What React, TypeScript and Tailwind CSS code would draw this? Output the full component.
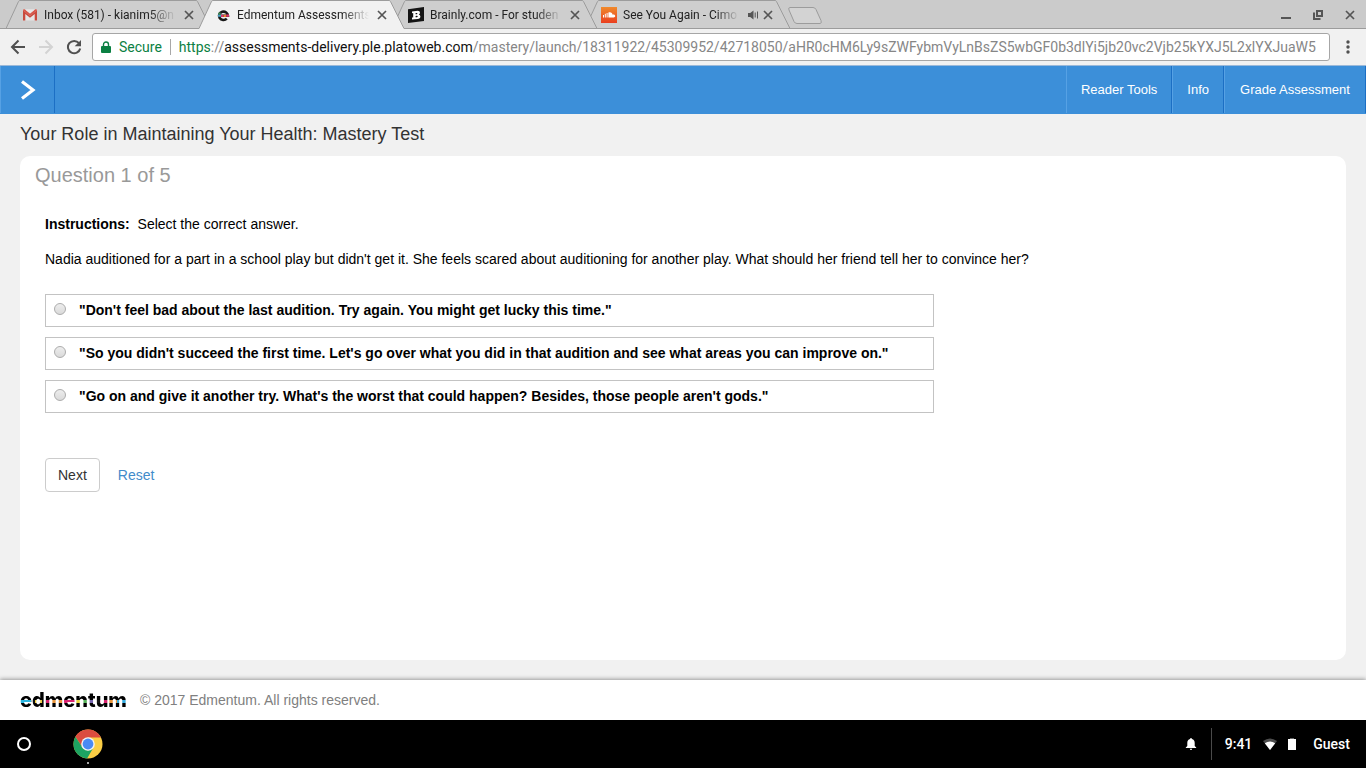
import { useState } from 'react';
import type { ReactNode } from 'react';
import clsx from 'clsx';

type TabProps = {
  title: string;
  icon: ReactNode;
  active?: boolean;
  audio?: boolean;
  className?: string;
};

const GmailIcon = () => (
  <svg viewBox="0 0 16 16" className="size-4">
    <path d="M1.5 2.5h13v11h-13z" fill="#e4e4e4" />
    <path d="M1 13.5V3.2l7 5.6 7-5.6v10.3h-2.3V7L8 10.8 3.3 7v6.5z" fill="#c9493c" />
    <path d="M1 3.4c0-1.1 1.2-1.4 2-.8l5 4 5-4c.8-.6 2-.3 2 .8L8 9z" fill="#d8574a" />
    <path d="M3.3 2.6h9.4L8 6.5z" fill="#e8e6e6" />
  </svg>
);

const EdmentumIcon = () => (
  <svg viewBox="0 0 16 16" className="size-4">
    <path
      d="M5 8.8h8A4.5 4.2 0 1 0 11.8 11.700"
      fill="none"
      stroke="#171717"
      strokeWidth="2.600"
    />
    <path d="M3 7.400h3v2.400H3z" fill="#4b9fc4" />
    <path d="M6 7.800h2.600v2.200H6z" fill="#d9336c" />
    <path d="M8.600 7.800h2.600v2.200H8.600z" fill="#e8842d" />
    <path d="M11.200 7.400H14v2.400h-2.800z" fill="#d9336c" />
    <path d="M3.500 5.500h2.200v1.900H3.300z" fill="#3f8f52" />
  </svg>
);

const BrainlyIcon = () => (
  <svg viewBox="0 0 16 16" className="size-4">
    <path d="M0 2.2 16 0v14L0 16z" fill="#141414" />
    <path
      fillRule="evenodd"
      d="M4 4.4 9.8 3.8q2.2 0 2.2 1.9 0 1.3-1.2 1.8 1.6.3 1.6 2 0 2.3-2.8 2.5L4 12.4v-1.8l1.2-.1V6.1L4 6.2zM7.6 6v1.2h1q.8-.1.8-.7T8.7 6zm0 2.9v1.4l1.2-.1q.9-.1.9-.8t-.9-.6z"
      fill="#fff"
    />
  </svg>
);

const SoundcloudIcon = () => (
  <svg viewBox="0 0 16 16" className="size-4">
    <defs>
      <linearGradient id="sc" x1="0" y1="0" x2="0" y2="1">
        <stop offset="0" stopColor="#f08a2c" />
        <stop offset="1" stopColor="#ea3f1f" />
      </linearGradient>
    </defs>
    <path d="M0 0h16v16H0z" fill="url(#sc)" />
    <path d="M2.5 8v2.5M4.3 6.8v3.7M6.1 6v4.5" stroke="#fff" strokeWidth="1" />
    <path d="M7.4 10.5V5.6c2-1 4 0 4.2 2.1 1.4-.4 2.6.3 2.6 1.4s-.8 1.4-1.5 1.4z" fill="#fff" />
  </svg>
);

const CloseIcon = ({ className }: { className: string }) => (
  <svg viewBox="0 0 10 10" className={className}>
    <path d="m1 1 8 8M9 1 1 9" stroke="currentColor" strokeWidth="1.7" />
  </svg>
);

const Tab = ({ title, icon, active, audio, className }: TabProps) => (
  <div className={clsx('relative h-[29px] w-[205px]', className)}>
    <svg viewBox="0 0 205 29" className="absolute inset-0 h-full w-full">
      <path
        d="M0 29V28.5L12.5 1.5Q13 .5 14 .5H190Q191 .5 191.5 1.5L205 28.5V29Z"
        fill={active ? '#f1f1f1' : '#cecece'}
      />
      <path
        d={
          active
            ? 'M0 28.5L12.5 1.5Q13 .5 14 .5H190Q191 .5 191.5 1.5L205 28.5'
            : 'M0 28.5L12.5 1.5Q13 .5 14 .5H190Q191 .5 191.5 1.5L205 28.5H0'
        }
        fill="none"
        stroke="#9c9c9c"
      />
    </svg>
    <div className="relative flex h-full items-center pr-[17px] pl-4">
      {icon}
      <span className="ml-[6px] min-w-0 flex-1 mask-r-from-80% text-xs whitespace-nowrap text-[#222]">
        {title}
      </span>
      {audio && (
        <svg viewBox="0 0 12 12" className="ml-2 size-3 text-[#555]">
          <path d="M1 4h2.2L6.5 1.500v9L3.200 8H1z" fill="currentColor" />
          <path d="M8.200 3.500v5M10.500 2.500v7" stroke="currentColor" strokeWidth="1" />
        </svg>
      )}
      <button
        type="button"
        aria-label="Close tab"
        className={clsx('text-[#555]', audio ? 'ml-1' : 'ml-2')}
      >
        <CloseIcon className="size-[10px]" />
      </button>
    </div>
  </div>
);

const TabStrip = () => (
  <div className="flex h-[29px] justify-between bg-[#cbcbcb] shadow-[inset_0_-1px_0_#9c9c9c]">
    <div className="flex pl-[6px]">
      <Tab title="Inbox (581) - kianim5@n" icon={<GmailIcon />} className="z-10" />
      <Tab
        title="Edmentum Assessments"
        icon={<EdmentumIcon />}
        active
        className="z-20 -ml-3"
      />
      <Tab title="Brainly.com - For studen" icon={<BrainlyIcon />} className="z-10 -ml-3" />
      <Tab title="See You Again - Cimo" icon={<SoundcloudIcon />} audio className="-ml-3" />
      <button type="button" aria-label="New tab" className="-ml-1">
        <svg viewBox="0 0 38 20" className="h-5 w-[38px]">
          <path
            d="M4 2.5h23q2 0 3 2l5 11q1 3-1 3H11q-2 0-3-2L3 5q-1-2.5 1-2.5z"
            fill="#d3d3d3"
            stroke="#9c9c9c"
          />
        </svg>
      </button>
    </div>
    <div className="flex items-center gap-[22px] pr-[11px] text-[#555]">
      <button type="button" aria-label="Minimize">
        <svg viewBox="0 0 10 10" className="size-[10px]">
          <path d="M0 7h10v2H0z" fill="currentColor" />
        </svg>
      </button>
      <button type="button" aria-label="Restore">
        <svg viewBox="0 0 10 10" className="size-[10px]">
          <path d="M4 1h5v5H4zM1 2.5V9h6.5" fill="none" stroke="currentColor" strokeWidth="2" />
        </svg>
      </button>
      <button type="button" aria-label="Close">
        <CloseIcon className="size-[10px]" />
      </button>
    </div>
  </div>
);

const Toolbar = () => (
  <div className="flex h-[37px] items-center border-b border-[#9bb9d9] bg-[#f1f1f1] pl-[10px] text-[#505050]">
    <button type="button" aria-label="Back">
      <svg viewBox="0 0 16 16" className="size-4">
        <path d="M15 8H2.5M8.5 1.5 2 8l6.5 6.5" fill="none" stroke="currentColor" strokeWidth="2" />
      </svg>
    </button>
    <button type="button" aria-label="Forward" className="ml-3 text-[#d3d3d3]">
      <svg viewBox="0 0 16 16" className="size-4">
        <path d="M1 8h12.5M7.5 1.5 14 8l-6.5 6.5" fill="none" stroke="currentColor" strokeWidth="2" />
      </svg>
    </button>
    <button type="button" aria-label="Reload" className="ml-3">
      <svg viewBox="0 0 16 16" className="size-4">
        <path
          d="M13 4.2A6.2 6.2 0 1 0 14.2 9.5"
          fill="none"
          stroke="currentColor"
          strokeWidth="2"
        />
        <path d="M15 1v6.3H8.7z" fill="currentColor" />
      </svg>
    </button>
    <div className="ml-[10px] flex h-7 min-w-0 flex-1 items-center overflow-hidden rounded-[3px] border border-[#a6a6a6] bg-white pr-1 pl-2 text-sm whitespace-nowrap">
      <svg viewBox="0 0 10 12" className="h-3 w-[10px] shrink-0 text-[#0b8043]">
        <path d="M1 5h8q1 0 1 1v5q0 1-1 1H1q-1 0-1-1V6q0-1 1-1z" fill="currentColor" />
        <path d="M2.5 5.5V3.5a2.5 2.5 0 0 1 5 0v2" fill="none" stroke="currentColor" strokeWidth="1.4" />
      </svg>
      <span className="ml-2 text-[#0b8043]">Secure</span>
      <span className="mx-2 h-4 w-px shrink-0 bg-[#a8a8a8]" />
      <span className="text-[#868686]">
        <span className="text-[#0b8043]">https</span>://
        <span className="text-[#111]">assessments-delivery.ple.platoweb.com</span>
        /mastery/launch/18311922/45309952/42718050/aHR0cHM6Ly9sZWFybmVyLnBsZS5wbGF0b3dlYi5jb20vc2Vjb25kYXJ5L2xlYXJuaW5
      </span>
    </div>
    <button type="button" aria-label="Menu" className="mr-4 ml-4">
      <svg viewBox="0 0 4 14" className="h-[14px] w-1">
        <g fill="currentColor">
          <circle cx="2" cy="2" r="1.7" />
          <circle cx="2" cy="7" r="1.7" />
          <circle cx="2" cy="12" r="1.7" />
        </g>
      </svg>
    </button>
  </div>
);

const navItems = ['Reader Tools', 'Info', 'Grade Assessment'];

const Header = () => (
  <header className="flex h-12 justify-between bg-[#3c8fd9] pb-px text-[13px] text-white">
    <button
      type="button"
      aria-label="Open menu"
      className="flex w-[55px] items-center justify-center border-r border-l border-r-[#1c6fc4] border-l-[#56a1e4]"
    >
      <svg viewBox="0 0 16 20" className="h-5 w-4">
        <path d="m2 1.5 11 8.5-11 8.5" fill="none" stroke="#fff" strokeWidth="3.2" />
      </svg>
    </button>
    <nav className="flex">
      {navItems.map((item) => (
        <button
          key={item}
          type="button"
          className="border-r border-l border-r-[#1c6fc4] border-l-[#56a1e4] px-[14px] last:w-[142px]"
        >
          {item}
        </button>
      ))}
    </nav>
  </header>
);

const answers = [
  `"Don't feel bad about the last audition. Try again. You might get lucky this time."`,
  `"So you didn't succeed the first time. Let's go over what you did in that audition and see what areas you can improve on."`,
  `"Go on and give it another try. What's the worst that could happen? Besides, those people aren't gods."`,
];

const Question = () => {
  const [selected, setSelected] = useState<number | null>(null);

  return (
    <main className="flex flex-1 flex-col px-5 pb-5">
      <h1 className="pt-[6px] pb-2 text-lg text-[#333]">
        Your Role in Maintaining Your Health: Mastery Test
      </h1>
      <section className="flex-1 rounded-[10px] bg-white px-[15px] pt-[5px]">
        <h2 className="text-xl text-[#999]">Question 1 of 5</h2>
        <div className="px-[10px] pt-[23px] text-sm text-black">
          <p className="leading-[25px]">
            <strong>Instructions:</strong>&nbsp; Select the correct answer.
          </p>
          <p className="mt-[10px] leading-[25px]">
            Nadia auditioned for a part in a school play but didn't get it. She feels scared about
            auditioning for another play. What should her friend tell her to convince her?
          </p>
          <div className="mt-[22px] flex max-w-[889px] flex-col gap-[10px]">
            {answers.map((answer, i) => (
              <label
                key={answer}
                className="flex min-h-[33px] items-center border border-[#c3c3c3] pb-[2px] pl-2 font-bold"
              >
                <input
                  type="radio"
                  name="answer"
                  checked={selected === i}
                  onChange={() => setSelected(i)}
                  className="mr-[13px] mb-px size-3 shrink-0 appearance-none rounded-full border border-[#acacac] bg-linear-to-b from-[#ededed] to-[#dadada] checked:from-[#777] checked:to-[#555]"
                />
                {answer}
              </label>
            ))}
          </div>
          <div className="mt-[45px] flex items-center gap-[18px]">
            <button
              type="button"
              className="h-[34px] rounded-[4px] border border-[#ccc] bg-white px-3 text-[#333]"
            >
              Next
            </button>
            <button type="button" onClick={() => setSelected(null)} className="text-[#428bca]">
              Reset
            </button>
          </div>
        </div>
      </section>
    </main>
  );
};

const Footer = () => (
  <footer className="flex h-10 items-center bg-white px-5 text-sm text-[#808080] shadow-[0_-1px_4px_#999]">
    <div className="flex w-[120px] text-black">
      <span className="bg-black bg-[linear-gradient(90deg,#2bb5de_0_11px,#111_11px_15px,#e8c93a_15px_22px,#111_22px_26px,#d9246f_26px_32px,#e8953a_32px_42px,#d9246f_42px_56px,#e8d33a_56px_60px,#58b55a_60px_68px,#7565ad_68px_75px,#111_75px_80px,#d9246f_80px_88px,#e8953a_88px_97px,#36ace0_97px_110px)] bg-[length:100%_3px] bg-[position:0_12px] bg-clip-text bg-no-repeat font-['Inter'] text-xl leading-6 font-extrabold text-transparent">
        edmentum
      </span>
    </div>
    <p>© 2017 Edmentum. All rights reserved.</p>
  </footer>
);

const Shelf = () => (
  <div className="flex h-12 items-center justify-between bg-black pr-4 pl-[17px] font-['Roboto',sans-serif] text-sm font-medium text-white">
    <div className="flex items-center gap-[42px]">
      <button type="button" aria-label="Launcher">
        <svg viewBox="0 0 14 14" className="size-[14px]">
          <circle cx="7" cy="7" r="6" fill="none" stroke="#fff" strokeWidth="2" />
        </svg>
      </button>
      <button type="button" aria-label="Chrome">
        <svg viewBox="0 0 30 40" className="h-10 w-[30px]">
          <g transform="translate(15 20)">
            <circle r="14.5" fill="#fbce45" />
            <path d="M0-6.5H13A14.5 14.5 0 0 0-12.6-7.2L-5.6 3.3z" fill="#db4c3f" />
            <path d="M-12.6-7.2A14.5 14.5 0 0 0-.9 14.5L5.6 3.3 0 6.5-5.6 3.3z" fill="#1da362" />
            <circle r="6.8" fill="#f3f3f3" />
            <circle r="5.4" fill="#4a8af4" />
          </g>
          <circle cx="15" cy="39" r="1" fill="#ddd" />
        </svg>
      </button>
    </div>
    <div className="flex items-center">
      <svg viewBox="0 0 12 12" className="size-3">
        <path
          d="M6 0q.9 0 .9 1.1C8.9 1.6 9.7 3 9.7 5v3l1.5 1.5v.6H.8v-.6L2.3 8V5c0-2 .8-3.4 2.8-3.9Q5.1 0 6 0zM4.8 10.8h2.4Q7 12 6 12t-1.2-1.2z"
          fill="#fff"
        />
      </svg>
      <span className="ml-[14px] h-8 w-px bg-[#4a4a4a]" />
      <span className="ml-[13px]">9:41</span>
      <svg viewBox="0 0 16 12" className="ml-[10px] h-3 w-4">
        <path d="M1 3Q8-2 15 3L8 12z" fill="#4d4d4d" />
        <path d="M2.8 5.2Q8 1.8 13.2 5.2L8 12z" fill="#fff" />
      </svg>
      <svg viewBox="0 0 8 12" className="ml-[10px] h-3 w-2">
        <path d="M2 0h4v1H2z" fill="#666" />
        <path d="M0 1h8v11H0z" fill="#fff" />
      </svg>
      <span className="ml-[17px]">Guest</span>
    </div>
  </div>
);

const App = () => (
  <div className="flex min-h-screen flex-col bg-[#f1f1f1] font-['Liberation_Sans',Arial,sans-serif]">
    <div className="font-['Roboto',sans-serif]">
      <TabStrip />
      <Toolbar />
    </div>
    <Header />
    <Question />
    <Footer />
    <Shelf />
  </div>
);

export default App;
